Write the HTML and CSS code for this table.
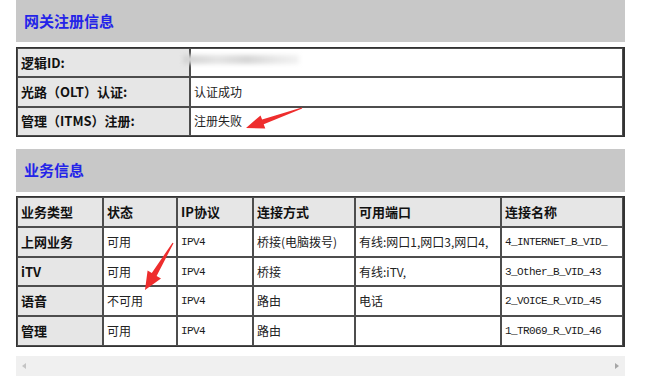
FILE: index.html
```html
<!DOCTYPE html>
<html lang="zh-CN">
<head>
    <meta charset="UTF-8">
    <title>网关信息</title>
    <link rel="stylesheet" href="styles.css">
</head>
<body>
    <div class="page">
        <div class="section-title">网关注册信息</div>
        <table class="info-table reg-table">
            <colgroup>
                <col class="reg-label">
                <col>
            </colgroup>
            <tr>
                <th>逻辑ID:</th>
                <td></td>
            </tr>
            <tr>
                <th>光路（OLT）认证:</th>
                <td>认证成功</td>
            </tr>
            <tr>
                <th>管理（ITMS）注册:</th>
                <td>注册失败</td>
            </tr>
        </table>

        <div class="section-title second">业务信息</div>
        <table class="info-table svc-table">
            <colgroup>
                <col style="width: 86px">
                <col style="width: 74px">
                <col style="width: 76px">
                <col style="width: 102px">
                <col style="width: 146px">
                <col>
            </colgroup>
            <tr>
                <th>业务类型</th>
                <th>状态</th>
                <th>IP协议</th>
                <th>连接方式</th>
                <th>可用端口</th>
                <th>连接名称</th>
            </tr>
            <tr>
                <th>上网业务</th>
                <td>可用</td>
                <td class="mono">IPV4</td>
                <td>桥接(电脑拨号)</td>
                <td>有线:网口1,网口3,网口4,</td>
                <td class="mono">4_INTERNET_B_VID_</td>
            </tr>
            <tr>
                <th>iTV</th>
                <td>可用</td>
                <td class="mono">IPV4</td>
                <td>桥接</td>
                <td>有线:iTV,</td>
                <td class="mono">3_Other_B_VID_43</td>
            </tr>
            <tr>
                <th>语音</th>
                <td>不可用</td>
                <td class="mono">IPV4</td>
                <td>路由</td>
                <td>电话</td>
                <td class="mono">2_VOICE_R_VID_45</td>
            </tr>
            <tr>
                <th>管理</th>
                <td>可用</td>
                <td class="mono">IPV4</td>
                <td>路由</td>
                <td></td>
                <td class="mono">1_TR069_R_VID_46</td>
            </tr>
        </table>

        <div class="hscroll">
            <span class="scroll-left"></span>
            <span class="scroll-right"></span>
        </div>

        <!-- 打码的逻辑ID -->
        <div class="masked"></div>

        <!-- 红色标注箭头 -->
        <svg class="marks" width="650" height="376" viewBox="0 0 650 376">
            <polygon fill="#ee2d2d" points="246,128 265.3,128.5 263.7,124.3 302.2,108.5 301.8,107.5 262.1,119.6 260.5,115.4"/>
            <polygon fill="#ee2d2d" points="145,290 161,278.6 156.6,276 173.5,243.3 172.5,242.7 151.8,273 147.6,270.4"/>
        </svg>
    </div>
</body>
</html>
```

FILE: styles.css
```css
* {
    box-sizing: border-box;
}
body {
    margin: 0;
    background: #fff;
    font-family: "Noto Sans CJK SC", sans-serif;
    font-size: 12px;
    color: #222;
}
.page {
    position: relative;
    width: 650px;
    height: 376px;
    padding-left: 16px;
    overflow: hidden;
}
.section-title {
    width: 609px;
    height: 42px;
    line-height: 42px;
    padding-left: 8px;
    background: #c8c8c8;
    color: #2424e8;
    font-size: 15px;
    font-weight: bold;
}
.section-title.second {
    height: 43px;
    margin-top: 12px;
}
.info-table {
    width: 609px;
    margin-top: 5px;
    border-collapse: separate;
    border-spacing: 0;
    border: 1px solid #333;
    border-right-width: 2px;
    table-layout: fixed;
}
.info-table th,
.info-table td {
    height: 29.75px;
    padding: 0 3px;
    border: 1px solid #4d4d4d;
    text-align: left;
    vertical-align: middle;
    line-height: 16px;
    white-space: nowrap;
    overflow: hidden;
}
.info-table th {
    background: #e6e6e6;
    color: #111;
    font-size: 13px;
    font-weight: bold;
}
.info-table td {
    background: #fff;
}
.reg-table th,
.reg-table td {
    height: 29.33px;
}
.reg-label {
    width: 173px;
}
.svc-table {
    margin-top: 4px;
}
.svc-table tr:first-child th {
    height: 30px;
}
.mono {
    font-family: "Liberation Mono", monospace;
    font-size: 11px;
    letter-spacing: -0.6px;
    color: #1a1a1a;
}
.hscroll {
    position: relative;
    width: 609px;
    height: 20px;
    margin-top: 9px;
    background: #f0f0f0;
}
.scroll-left,
.scroll-right {
    position: absolute;
    top: 7px;
    width: 0;
    height: 0;
    border-top: 3.5px solid transparent;
    border-bottom: 3.5px solid transparent;
}
.scroll-left {
    left: 6px;
    border-right: 4px solid #c4c4c4;
}
.scroll-right {
    right: 6px;
    border-left: 4px solid #a6a6a6;
}
.masked {
    position: absolute;
    left: 183px;
    top: 55px;
    width: 116px;
    height: 9px;
    background: linear-gradient(90deg, #d2d2d2, #e4e4e4 30%, #d6d6d6 55%, #e8e8e8 80%, #f2f2f2);
    filter: blur(2px);
}
.marks {
    position: absolute;
    left: 0;
    top: 0;
    pointer-events: none;
}
```
